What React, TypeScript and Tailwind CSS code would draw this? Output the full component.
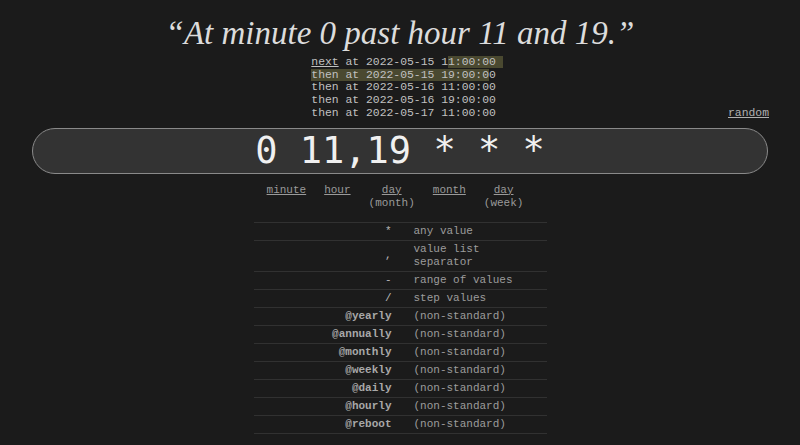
import React from "react";

const runs = [
  "then at 2022-05-16 11:00:00",
  "then at 2022-05-16 19:00:00",
  "then at 2022-05-17 11:00:00",
];

const symbols: [string, string][] = [
  ["*", "any value"],
  [",", "value list separator"],
  ["-", "range of values"],
  ["/", "step values"],
];

const specials = ["@yearly", "@annually", "@monthly", "@weekly", "@daily", "@hourly", "@reboot"];

const mono = "font-['Liberation_Mono','Courier_New',monospace]";

const App: React.FC = () => {
  return (
    <div className="min-h-screen bg-[#1b1b1b] text-[#c8c8c8]">
      <h1 className="pt-[12px] text-center font-['Liberation_Serif',Georgia,serif] text-[33px] italic leading-[42px] text-[#dcdcdc]">
        &ldquo;At minute 0 past hour 11 and 19.&rdquo;
      </h1>

      <div className="mx-[31px] mt-[2px] grid grid-cols-[1fr_auto_1fr]">
        <div />
        <div className={`${mono} pl-[14px] text-[11.4px] leading-[12.7px] text-[#c0c0c0] whitespace-pre`}>
          <div>
            <span className="underline">next</span> at 2022-05-15 1
            <span className="bg-[#4a4930]">1:00:00 </span>
          </div>
          <div>
            <span className="bg-[#4a4930]">then at 2022-05-15 19:00:0</span>0
          </div>
          {runs.map((r) => (
            <div key={r}>{r}</div>
          ))}
        </div>
        <div className="flex items-end justify-end">
          <a className={`${mono} text-[11.4px] leading-[12.7px] text-[#b0b0b0] underline`}>random</a>
        </div>
      </div>

      <div className="mx-[32px] mt-[8px] flex h-[46px] items-center justify-center rounded-full border border-[#8a8a8a] bg-[#333333]">
        <span className="font-['DejaVu_Sans_Mono',monospace] text-[37px] leading-none text-[#f0f0f0] whitespace-pre">
          0 11,19 * * *
        </span>
      </div>

      <div className={`${mono} mt-[10px] flex justify-center gap-[18px] pr-[10px] text-[11px] leading-[13px] text-[#9a9a9a]`}>
        <div className="text-center"><span className="underline">minute</span></div>
        <div className="text-center"><span className="underline">hour</span></div>
        <div className="text-center">
          <span className="underline">day</span>
          <br />(month)
        </div>
        <div className="text-center"><span className="underline">month</span></div>
        <div className="text-center">
          <span className="underline">day</span>
          <br />(week)
        </div>
      </div>

      <div className={`${mono} mx-auto mt-[12px] w-[293px] border-t border-[#313131] text-[11px] leading-[13px]`}>
        {symbols.map(([s, d]) => (
          <div key={s} className="flex items-center border-b border-[#313131] py-[2px]">
            <div className="w-[150px] pr-[12px] text-right text-[#b8b8b8]">{s}</div>
            <div className="w-[143px] pl-[10px] pr-[8px] text-[#9c9c9c]">{d}</div>
          </div>
        ))}
        {specials.map((s) => (
          <div key={s} className="flex items-center border-b border-[#313131] py-[2px]">
            <div className="w-[150px] pr-[12px] text-right font-bold text-[#a8a8a8]">{s}</div>
            <div className="w-[143px] pl-[10px] text-[#9c9c9c]">(non-standard)</div>
          </div>
        ))}
      </div>
    </div>
  );
};

export default App;
